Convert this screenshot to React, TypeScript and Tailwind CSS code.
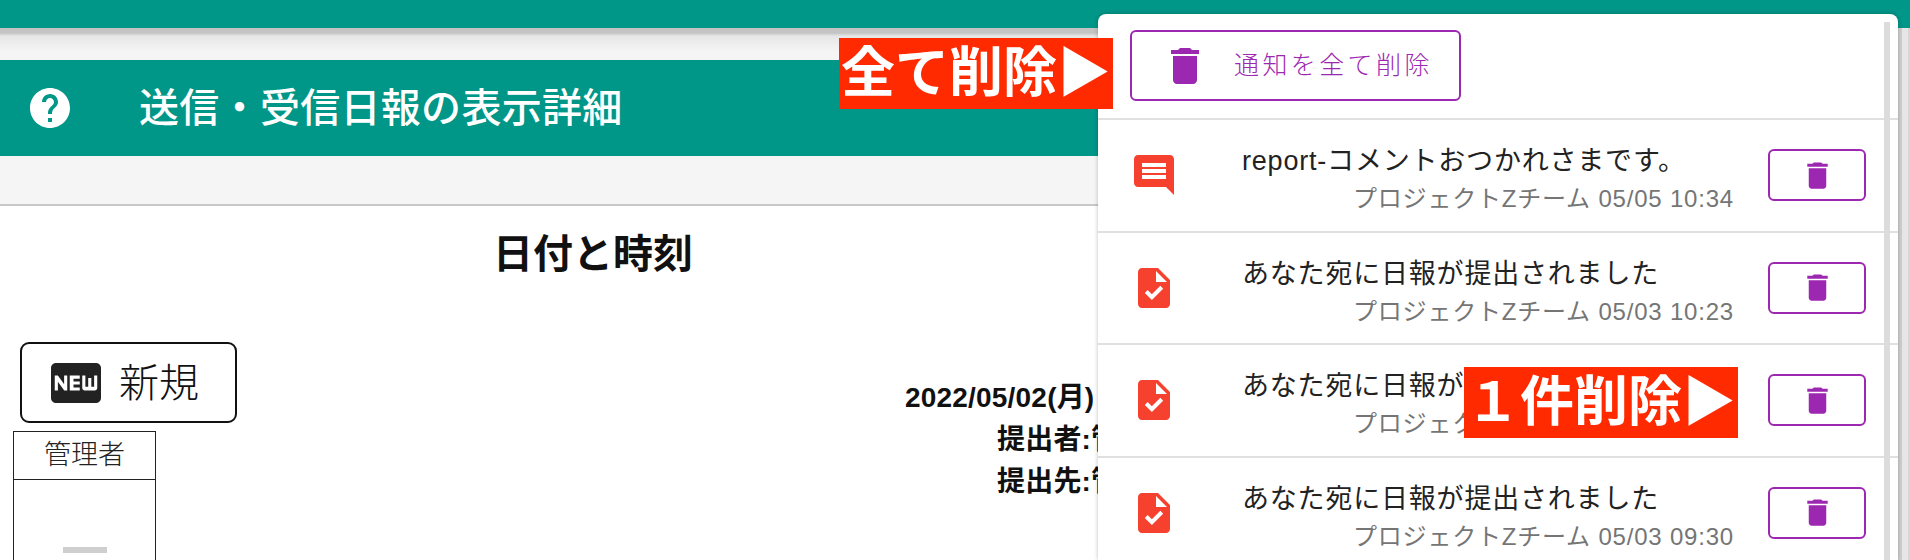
import { MdComment, MdDelete, MdHelp, MdTask } from "react-icons/md"

const rows = [
  { type: "comment", title: "report-コメントおつかれさまです。", time: "05/05 10:34" },
  { type: "task", title: "あなた宛に日報が提出されました", time: "05/03 10:23" },
  { type: "task", title: "あなた宛に日報が提出されました", time: "05/03 10:23" },
  { type: "task", title: "あなた宛に日報が提出されました", time: "05/03 09:30" },
]

function NewIcon() {
  return (
    <svg viewBox="0 0 24 24" className="h-[60px] w-[60px] shrink-0 fill-[#222]">
      <path d="M20 4H4c-1.11 0-1.99.89-1.99 2L2 18c0 1.11.89 2 2 2h16c1.11 0 2-.89 2-2V6c0-1.11-.89-2-2-2zM8.5 15H7.3l-2.55-3.5V15H3.5V9h1.25l2.5 3.5V9H8.5v6zm5-4.74H11v1.12h2.5v1.26H11v1.11h2.5V15h-4V9h4v1.26zm7 3.74c0 .55-.45 1-1 1h-4c-.55 0-1-.45-1-1V9h1.25v4.51h1.13V9.99h1.25v3.51h1.12V9h1.25v5z" />
    </svg>
  )
}

function NoticeRow({ type, title, time }: { type: string; title: string; time: string }) {
  const Icon = type === "comment" ? MdComment : MdTask
  return (
    <div className="flex h-[112.5px] shrink-0 items-center border-b-2 border-[#e0e0e0] pl-[32px]">
      <Icon className="h-[48px] w-[48px] shrink-0 text-[#f6412f]" />
      <div className="ml-[64px] w-[492px] self-start pt-[22px]">
        <p className="text-[27px] leading-[38px] tracking-[0.8px] text-[#222] whitespace-nowrap">{title}</p>
        <p className="text-right text-[24px] leading-[38px] tracking-[0.8px] text-[#757575] whitespace-nowrap">
          プロジェクトZチーム {time}
        </p>
      </div>
      <button className="ml-[34px] flex h-[52px] w-[98px] shrink-0 items-center justify-center rounded-[6px] border-2 border-[#9c27b0] text-[#9c27b0]">
        <MdDelete className="h-[35px] w-[35px]" />
      </button>
    </div>
  )
}

export default function App() {
  return (
    <div className="relative h-[560px] w-[1910px] overflow-hidden bg-white font-['Liberation_Sans','Noto_Sans_CJK_JP',sans-serif]">
      <div className="h-[28px] bg-[#009688]" />

      <div className="flex h-[532px]">
        <main className="min-w-0 flex-1">
          <div className="h-[32px] bg-[linear-gradient(#c4c4c4_0,#c4c4c4_5px,#e6e6e6_8px,#f0f0f0_18px,#f5f5f5_24px)]" />
          {/* ページタイトル */}
          <div className="flex h-[96px] items-center bg-[#009688] pl-[26px] text-white">
            <MdHelp className="h-[48px] w-[48px]" />
            <h1 className="ml-[65px] text-[40px] font-medium leading-none tracking-[0.3px]">送信・受信日報の表示詳細</h1>
          </div>
          <div className="h-[50px] border-b-2 border-[#c8c8c8] bg-[#f5f5f5]" />

          <h2 className="mt-[22px] h-[52px] w-[1186px] text-center text-[40px] font-bold leading-[52px] text-[#111]">
            日付と時刻
          </h2>

          <div className="mt-[62px] flex">
            <div className="w-[905px]">
              <button className="ml-[20px] flex h-[81px] w-[217px] items-center rounded-[9px] border-2 border-[#111] pl-[24px] text-[40px] font-light text-[#111]">
                <NewIcon />
                <span className="ml-[13px]">新規</span>
              </button>
              <div className="ml-[13px] mt-[8px] w-[143px] border border-[#222]">
                <div className="flex h-[48px] items-center justify-center border-b border-[#222] text-[27px] font-light text-[#222]">
                  管理者
                </div>
                <div className="flex h-[100px] justify-center pt-[67px]">
                  <div className="h-[6px] w-[44px] bg-[#cfcfcf]" />
                </div>
              </div>
            </div>
            <div className="pt-[35px] text-[28px] font-bold leading-[42px] tracking-[0.2px] text-[#111] whitespace-nowrap">
              <p>2022/05/02(月)</p>
              <p className="pl-[92px]">提出者:管理者</p>
              <p className="pl-[92px]">提出先:管理者</p>
            </div>
          </div>
        </main>
        {/* ページのスクロールバー */}
        <div className="w-[12px] shrink-0 border-l-4 border-r-2 border-l-[#cfcfcf] border-r-[#d6d6d6] bg-[#e6e6e6]" />
      </div>

      {/* 通知パネル */}
      <aside className="absolute left-[1098px] top-[14px] flex h-[546px] w-[800px] flex-col overflow-hidden rounded-t-[8px] bg-white shadow-[0_0_4px_rgba(0,0,0,0.25)]">
        <div className="h-[106px] shrink-0 border-b-2 border-[#e0e0e0] pl-[32px] pt-[16px]">
          <button className="flex h-[71px] w-[331px] items-center rounded-[6px] border-2 border-[#9c27b0] pl-[29px] text-[#9c27b0]">
            <MdDelete className="h-[48px] w-[48px]" />
            <span className="ml-[25px] text-[25px] font-light tracking-[3.4px] whitespace-nowrap">通知を全て削除</span>
          </button>
        </div>
        {rows.map((row, i) => (
          <NoticeRow key={i} {...row} />
        ))}
        <div className="absolute bottom-0 right-[8px] top-[8px] w-[6px] bg-[#dcdcdc]" />
      </aside>

      {/* 注釈ラベル */}
      <div className="absolute left-[839px] top-[38px] flex h-[71px] w-[274px] items-center justify-center bg-[#ff2a00] text-[54px] font-bold text-white whitespace-nowrap">
        全て削除▶
      </div>
      <div className="absolute left-[1464px] top-[367px] flex h-[71px] w-[274px] items-center justify-center bg-[#ff2a00] text-[54px] font-bold text-white whitespace-nowrap">
        １件削除▶
      </div>
    </div>
  )
}
